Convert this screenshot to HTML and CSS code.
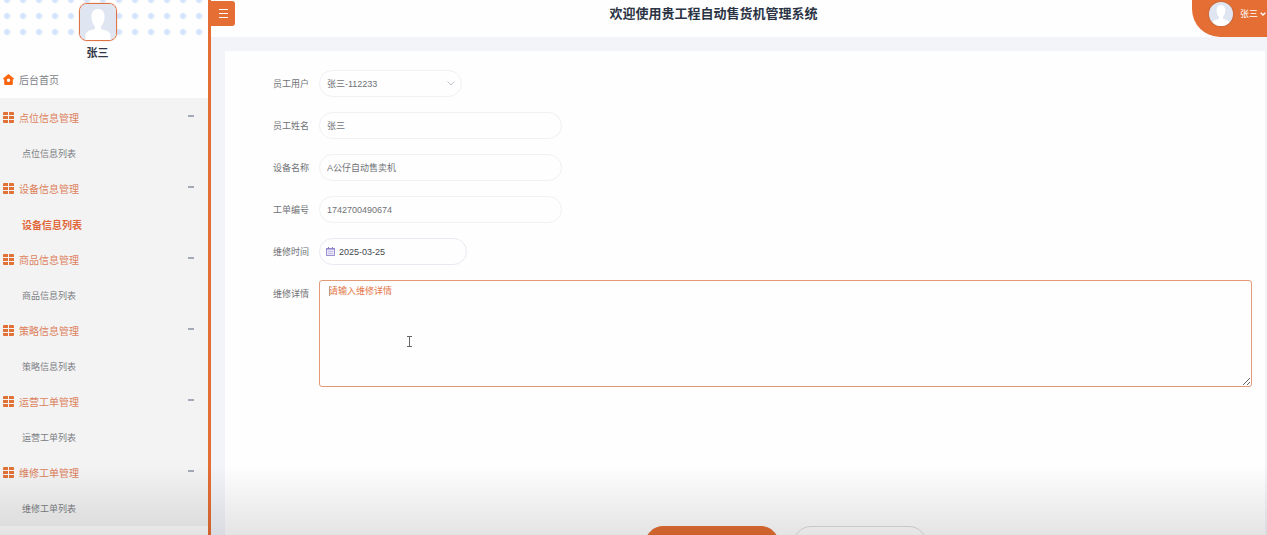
FILE: index.html
```
<!DOCTYPE html>
<html lang="zh-CN">

<head>
  <meta charset="UTF-8">
  <meta name="viewport" content="width=device-width, initial-scale=1.0">
  <link rel="stylesheet" href="styles.css">
  <title>欢迎使用贵工程自动售货机管理系统</title>
</head>

<body>
  <svg width="0" height="0" class="sprite">
    <symbol id="icon-grid" viewBox="0 0 22 22">
      <path d="M2 0h8v6H0V2a2 2 0 0 1 2-2zM12 0h8a2 2 0 0 1 2 2v4H12zM0 8h10v6H0zM12 8h10v6H12zM0 16h10v6H2a2 2 0 0 1-2-2zM12 16h10v4a2 2 0 0 1-2 2h-8z" />
    </symbol>
    <symbol id="icon-avatar" viewBox="0 0 36 36">
      <rect width="36" height="36" fill="#dfe6f2" />
      <path d="M18 5c-5 0-7 4-6.500 9 .4 4 2 7 3.500 8.500v2.500c-4 1.500-9 1.500-9.500 6V36h25v-5c-.5-4.500-5.500-4.500-9.500-6v-2.500c1.500-1.500 3.100-4.500 3.500-8.500C25 9 23 5 18 5z" fill="#fff" />
    </symbol>
  </svg>

  <div class="layout">
    <aside class="sidebar">
      <div class="profile">
        <svg class="profile-avatar"><use href="#icon-avatar" /></svg>
        <div class="profile-name">张三</div>
      </div>

      <a href="#" class="menu-home">
        <svg class="menu-icon" viewBox="0 0 11 11">
          <path fill-rule="evenodd" d="M5.500 0 11 4.500 10.300 5.500H9.800V10a1 1 0 0 1-1 1H2.200a1 1 0 0 1-1-1V5.500H.7L0 4.500zM5.500 4.500a1.700 1.700 0 1 0 0 3.400 1.700 1.700 0 0 0 0-3.400z" />
        </svg>
        后台首页
      </a>

      <nav class="menu">
        <button type="button" class="menu-title"><svg class="menu-icon"><use href="#icon-grid" /></svg>点位信息管理<span class="minus"></span></button>
        <a href="#" class="menu-link">点位信息列表</a>
        <button type="button" class="menu-title"><svg class="menu-icon"><use href="#icon-grid" /></svg>设备信息管理<span class="minus"></span></button>
        <a href="#" class="menu-link active">设备信息列表</a>
        <button type="button" class="menu-title"><svg class="menu-icon"><use href="#icon-grid" /></svg>商品信息管理<span class="minus"></span></button>
        <a href="#" class="menu-link">商品信息列表</a>
        <button type="button" class="menu-title"><svg class="menu-icon"><use href="#icon-grid" /></svg>策略信息管理<span class="minus"></span></button>
        <a href="#" class="menu-link">策略信息列表</a>
        <button type="button" class="menu-title"><svg class="menu-icon"><use href="#icon-grid" /></svg>运营工单管理<span class="minus"></span></button>
        <a href="#" class="menu-link">运营工单列表</a>
        <button type="button" class="menu-title"><svg class="menu-icon"><use href="#icon-grid" /></svg>维修工单管理<span class="minus"></span></button>
        <a href="#" class="menu-link">维修工单列表</a>
      </nav>
    </aside>

    <div class="page">
      <header class="header">
        <button type="button" class="toggle">
          <svg width="9" height="9" viewBox="0 0 9 9"><path d="M0 .5h9M0 4.500h9M0 8.500h9" stroke="#fff" /></svg>
        </button>
        <h1>欢迎使用贵工程自动售货机管理系统</h1>
        <button type="button" class="user">
          <svg class="user-avatar"><use href="#icon-avatar" /></svg>
          张三
          <svg class="user-arrow" width="6" height="4" viewBox="0 0 6 4"><path d="M.7.7 3 3 5.300.7" fill="none" stroke="#fff" stroke-width="1.400" /></svg>
        </button>
      </header>

      <main class="content">
        <form class="card">
          <div class="row">
            <label for="user">员工用户</label>
            <div class="field">
              <select id="user" class="short">
                <option>张三-112233</option>
              </select>
              <svg class="select-arrow" width="8" height="5" viewBox="0 0 8 5"><path d="M.5.5 4 4 7.500.5" fill="none" stroke="#c0c4cc" /></svg>
            </div>
          </div>
          <div class="row">
            <label for="name">员工姓名</label>
            <input type="text" id="name" value="张三">
          </div>
          <div class="row">
            <label for="device">设备名称</label>
            <input type="text" id="device" value="A公仔自动售卖机">
          </div>
          <div class="row">
            <label for="order">工单编号</label>
            <input type="text" id="order" value="1742700490674">
          </div>
          <div class="row">
            <label for="date">维修时间</label>
            <div class="field">
              <input type="text" id="date" class="date" value="2025-03-25">
              <svg class="date-icon" width="9" height="9" viewBox="0 0 9 9">
                <rect x=".5" y="1.500" width="8" height="7" fill="#e9e6fa" stroke="#9b92d0" />
                <path d="M0 2h9M2.500 0v2M6.500 0v2" stroke="#8a80c6" />
                <path d="M2 4.500h5M2 6.500h5" stroke="#c5bfe8" />
              </svg>
            </div>
          </div>
          <div class="row">
            <label for="detail">维修详情</label>
            <div class="field field-wide">
              <textarea id="detail" placeholder="请输入维修详情"></textarea>
              <span class="caret"></span>
              <svg class="pointer" width="5" height="11" viewBox="0 0 5 11"><path d="M0 .5h5M2.500.5v10M0 10.500h5" stroke="#666" /></svg>
            </div>
          </div>
          <div class="actions">
            <button type="submit" class="btn btn-primary"></button>
            <button type="button" class="btn"></button>
          </div>
        </form>
      </main>
    </div>
  </div>
  <div class="shade"></div>
</body>

</html>
```
FILE: styles.css
```
* {
  box-sizing: border-box;
}

body {
  margin: 0;
  font-family: 'Liberation Sans', 'Noto Sans CJK SC', sans-serif;
  font-size: 9px;
  color: #707277;
  background-color: #fefefe;
}

button,
input,
select,
textarea {
  font-family: inherit;
  font-size: 9px;
  color: #707277;
}

button {
  border: none;
  padding: 0;
  cursor: pointer;
}

a {
  text-decoration: none;
}

svg {
  display: block;
  flex-shrink: 0;
}

.sprite {
  position: absolute;
}

.layout {
  display: flex;
  height: 100vh;
  overflow: hidden;
}

/* sidebar */
.sidebar {
  width: 211px;
  flex-shrink: 0;
  border-right: 3px solid #e56e34;
  overflow: hidden;
}

.profile {
  display: flex;
  flex-direction: column;
  align-items: center;
  gap: 4px;
  height: 62px;
  padding: 3px 13px 0 0;
  background-image: radial-gradient(circle, #d5e4fc 2px, transparent 4px);
  background-size: 16px 16px;
  background-position: -1px 8px;
  position: relative;
}

/* the dots stop under the avatar */
.profile::after {
  content: "";
  position: absolute;
  top: 36px;
  left: 0;
  right: 0;
  bottom: 0;
  background-color: #fefefe;
}

.profile-avatar {
  width: 38px;
  height: 38px;
  border: 1px solid #dd7446;
  border-radius: 8px;
  box-shadow: 0 0 1px #dd7446;
  position: relative;
  z-index: 1;
}

.profile-name {
  font-size: 11px;
  font-weight: bold;
  line-height: 16px;
  color: #303645;
  position: relative;
  z-index: 1;
}

.menu-home,
.menu-title {
  display: flex;
  align-items: center;
  gap: 5px;
  width: 100%;
  height: 36px;
  padding: 0 14px 0 3px;
  font-size: 10px;
}

.menu-home {
  padding-bottom: 2px;
  color: #808287;
}

.menu-icon {
  width: 11px;
  height: 11px;
  fill: #e07238;
}

.menu-home .menu-icon {
  fill: #fd650d;
}

.menu {
  padding: 1px 0;
  background-color: #f3f3f3;
}

.menu-title {
  background: none;
  color: #dd7f5c;
}

.minus {
  width: 6px;
  height: 2px;
  margin-left: auto;
  margin-bottom: 2px;
  background-color: #a3a9b6;
}

.menu-link {
  display: block;
  height: 35px;
  padding: 2px 0 0 22px;
  line-height: 35px;
  color: #7b7e84;
}

.menu-link.active {
  font-size: 10px;
  font-weight: bold;
  color: #e0683a;
}

/* header */
.page {
  flex: 1;
  min-width: 0;
  display: flex;
  flex-direction: column;
  background-color: #f3f4fa;
}

.header {
  display: flex;
  align-items: flex-start;
  justify-content: space-between;
  height: 37px;
  flex-shrink: 0;
  background-color: #fefefe;
}

.toggle {
  display: flex;
  align-items: center;
  justify-content: center;
  width: 24px;
  height: 25px;
  margin-top: 1px;
  border-radius: 0 3px 3px 0;
  background-color: #e56e34;
}

h1 {
  margin: 0;
  font-size: 13px;
  font-weight: bold;
  line-height: 28px;
  color: #2b3445;
}

.user {
  display: flex;
  align-items: center;
  width: 75px;
  height: 37px;
  padding: 0 1px 10px 17px;
  border-radius: 0 0 0 28px;
  background-color: #e56e34;
  color: #fff;
}

.user-avatar {
  width: 24px;
  height: 24px;
  margin-right: 7px;
  border-radius: 50%;
  box-shadow: 0 0 2px #8a6a5a;
}

.user-arrow {
  margin-left: 2px;
}

/* form */
.content {
  flex: 1;
  padding: 14px 2px 0 14px;
}

.card {
  display: flex;
  flex-direction: column;
  gap: 15px;
  height: 100%;
  padding: 19px 13px 0 48px;
  background-color: #fefefe;
}

.row {
  display: flex;
  gap: 10px;
  height: 27px;
}

label {
  width: 36px;
  line-height: 28px;
}

.field {
  position: relative;
}

.field-wide {
  flex: 1;
}

input,
select {
  display: block;
  width: 243px;
  height: 27px;
  padding: 0 7px;
  border: 1px solid #f0f0f5;
  border-radius: 14px;
  background-color: #fefefe;
  appearance: none;
}

.short {
  width: 143px;
}

.date {
  width: 148px;
  padding-left: 19px;
  border-color: #e8e9f2;
  color: #45484e;
}

.select-arrow {
  position: absolute;
  top: 11px;
  right: 7px;
}

.date-icon {
  position: absolute;
  top: 9px;
  left: 7px;
}

textarea {
  display: block;
  width: 100%;
  height: 107px;
  padding: 4px 9px;
  border: 1px solid #e39a79;
  border-radius: 3px;
  background-color: #fefefe;
  line-height: 13px;
  outline: none;
  resize: vertical;
}

textarea::placeholder {
  color: #e4774a;
}

.caret {
  position: absolute;
  top: 6px;
  left: 10px;
  width: 1px;
  height: 10px;
  background-color: #c09a86;
}

.pointer {
  position: absolute;
  top: 56px;
  left: 88px;
}

.actions {
  display: flex;
  justify-content: center;
  gap: 14px;
  margin: 204px 0 0 46px;
}

.btn {
  width: 134px;
  height: 37px;
  border: 1px solid #dcdcdc;
  border-radius: 18px;
  background-color: transparent;
}

.btn-primary {
  border-color: #e56e34;
  background-color: #e56e34;
}

/* soft shadow along the bottom of the window */
.shade {
  position: fixed;
  left: 0;
  right: 0;
  bottom: 0;
  height: 70px;
  background: linear-gradient(transparent, rgba(0, 0, 0, 0.1));
  pointer-events: none;
}
```
